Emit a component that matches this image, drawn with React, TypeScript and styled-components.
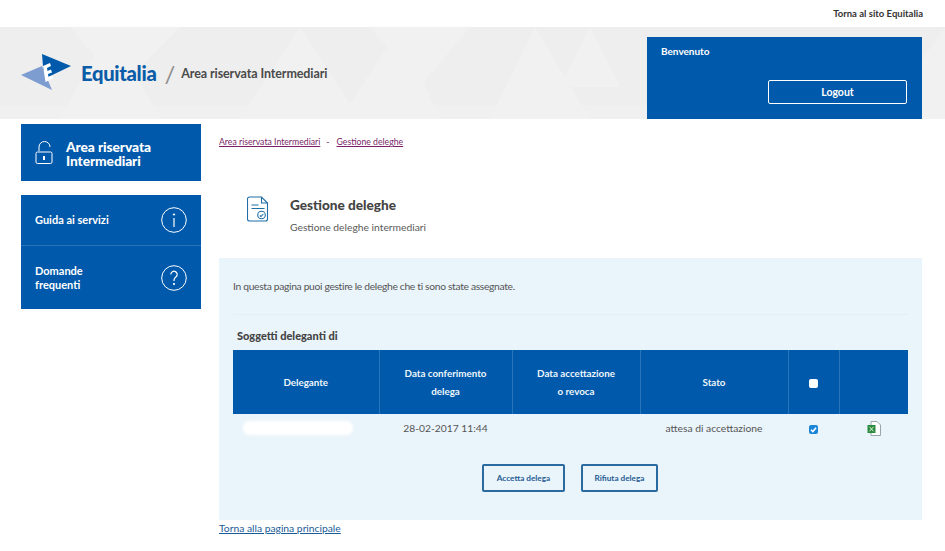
import React from "react";
import styled, { createGlobalStyle } from "styled-components";

const Global = createGlobalStyle`
  html, body { margin: 0; padding: 0; background: #fff; }
  body { font-family: "Lato", "Open Sans", sans-serif; color: #4a4a4a; width: 945px; height: 551px; overflow: hidden; }
  * { box-sizing: border-box; }
`;

const TopBar = styled.div`
  height: 27px; display: flex; align-items: center; justify-content: flex-end;
  padding-right: 22px;
  font-size: 9.5px; font-weight: 700; color: #333;
`;
const Header = styled.header`
  position: relative; height: 92px; background: #eeeeee; display: flex;
  justify-content: space-between; padding-left: 21px; padding-right: 23px; overflow: hidden;
`;
const HeaderArt = styled.svg`
  position: absolute; inset: 0; width: 100%; height: 100%;
`;
const Brand = styled.div`
  position: relative; display: flex; align-items: center; height: 92px;
`;
const LogoBox = styled.svg`
  flex: none; margin-bottom: 2px;
`;
const BrandName = styled.span`
  font-size: 20.2px; font-weight: 900; color: #0b5ca8; margin-left: 10px; letter-spacing: -0.3px;
`;
const Slash = styled.span`
  font-size: 24px; color: #8f8f8f; margin-left: 8px; margin-right: 6px; font-weight: 400;
`;
const AreaName = styled.span`
  font-size: 12.5px; font-weight: 700; color: #4a4a4a; letter-spacing: -0.1px;
`;
const UserPanel = styled.div`
  position: relative; width: 275px; height: 82px; margin-top: 10px; background: #0059aa;
  padding: 7px 15px 15px 14px; display: flex; flex-direction: column; justify-content: space-between;
`;
const Welcome = styled.div`
  color: #fff; font-size: 10px; font-weight: 700; line-height: 14px;
`;
const Logout = styled.button`
  align-self: flex-end; width: 139px; height: 24px; background: transparent; border: 1px solid #fff;
  border-radius: 2px; color: #fff; font: 700 10.5px "Lato", sans-serif;
`;
const Body = styled.div`
  display: flex; padding-left: 21px; padding-right: 23px; gap: 18px; align-items: flex-start;
`;
const Side = styled.aside`
  width: 180px; padding-top: 5px; flex: none; display: flex; flex-direction: column; gap: 14px;
`;
const AreaCard = styled.div`
  height: 57px; background: #0059aa; display: flex; align-items: center; padding-left: 14px; gap: 13px;
  color: #fff; font-size: 13.8px; font-weight: 900; line-height: 14px; letter-spacing: -0.1px;
`;
const AreaCardText = styled.div`
  padding-top: 2px;
`;
const Menu = styled.nav`
  background: #0059aa; display: flex; flex-direction: column;
`;
const MenuItem = styled.div<{ $h: number }>`
  height: ${(p) => p.$h}px; display: flex; align-items: center; justify-content: space-between;
  padding: 0 14px; color: #fff; font-size: 11px; font-weight: 700; line-height: 14px;
  & + & { border-top: 1px solid #2a75ba; }
`;
const Main = styled.main`
  flex: 1; min-width: 0;
`;
const Crumbs = styled.div`
  height: 47px; padding-top: 17px; font-size: 8.7px; line-height: 12px; color: #7a1f66;
  a { color: #7a1f66; text-decoration: underline; }
  span { margin: 0 7px 0 6px; }
`;
const TitleBlock = styled.div`
  height: 92px; padding-left: 28px; padding-top: 30px; display: flex; align-items: flex-start; gap: 21px;
`;
const PageTitle = styled.h1`
  margin: 0; font-size: 13.6px; font-weight: 900; line-height: 18px; color: #444;
`;
const PageSub = styled.p`
  margin: 6px 0 0; font-size: 10.3px; line-height: 14px; color: #5a5a5a;
`;
const Panel = styled.section`
  background: #eaf4fb; height: 262px; padding: 20px 14px 0;
`;
const Intro = styled.p`
  margin: 0; font-size: 10.3px; letter-spacing: -0.33px; line-height: 16px; height: 37px; color: #555; border-bottom: 1px solid #e3eef6;
`;
const SectionLabel = styled.div`
  margin-top: 14px; padding-left: 4px; font-size: 11px; font-weight: 900; line-height: 14px; color: #444; height: 21px;
`;
const Table = styled.table`
  border-collapse: collapse; table-layout: fixed; width: 675px;
`;
const Th = styled.th<{ $w: number }>`
  width: ${(p) => p.$w}px; height: 64px; background: #0059aa; color: #eef6fc; font-size: 9.8px; font-weight: 700;
  line-height: 18px; text-align: center; padding: 0 8px; border-left: 1px solid #2a75ba;
  &:first-child { border-left: 0; }
`;
const Td = styled.td`
  height: 28px; padding: 0; text-align: center; font-size: 10.3px; color: #555; vertical-align: middle;
`;
const Redact = styled.div`
  width: 110px; height: 14px; background: #fff; border-radius: 6px; margin: 0 0 0 10px; filter: blur(1.5px);
`;
const Box = styled.span<{ $on?: boolean }>`
  display: inline-flex; align-items: center; justify-content: center; width: 9px; height: 9px; border-radius: 2px;
  background: ${(p) => (p.$on ? "#1c86d6" : "#fff")}; vertical-align: middle;
`;
const Actions = styled.div`
  display: flex; justify-content: center; gap: 16px; margin-top: 22px; padding-right: 1px;
`;
const ActionBtn = styled.button<{ $w: number }>`
  width: ${(p) => p.$w}px; height: 28px; background: transparent; border: 2px solid #2a6a9f; border-radius: 2px;
  color: #1f5b92; font: 700 8.2px "Lato", sans-serif; padding: 0;
`;
const Back = styled.a`
  display: block; margin-top: 1px; font-size: 10.3px; line-height: 14px; color: #1b5c97; text-decoration: underline;
`;

const Logo = () => (
  <LogoBox width="50" height="38" viewBox="0 0 50 38">
    <polygon points="21,1 50,13 23,26" fill="#0059aa" />
    <polygon points="0,22 21,13 31,37" fill="#7d9ccf" />
    <polygon points="22,13 29,10 30,13 26,15 26.5,18 30,16.5 31,19.5 27,21 27.5,24 31.5,22.5 32,25.5 24.5,29" fill="#fff" />
  </LogoBox>
);
const Lock = () => (
  <svg width="18" height="25" viewBox="0 0 18 25" fill="none" stroke="#fff" strokeWidth="1">
    <path d="M4 11V7a5.5 5.5 0 0 1 11 0" />
    <rect x="1" y="12" width="16" height="11.5" rx="1.5" />
    <rect x="8" y="16" width="2" height="4" fill="#fff" stroke="none" />
  </svg>
);
const Circle = ({ g }: { g: string }) => (
  <svg width="26" height="26" viewBox="0 0 26 26" fill="none" stroke="#fff">
    <circle cx="13" cy="13" r="12.3" />
    {g === "i" ? (
      <>
        <path d="M13 11v9" strokeWidth="1.2" />
        <circle cx="13" cy="7.5" r="0.7" fill="#fff" />
      </>
    ) : (
      <>
        <path d="M9.8 9.5a3.2 3.2 0 1 1 5 2.6c-1.2.9-1.8 1.500-1.800 3v1" strokeWidth="1.2" />
        <circle cx="13" cy="19" r="0.7" fill="#fff" />
      </>
    )}
  </svg>
);
const DocIcon = () => (
  <svg width="22" height="26" viewBox="0 0 22 26" fill="none" stroke="#1f6ea8" strokeWidth="1.1" style={{ flex: "none" }}>
    <path d="M2.5 1h12l6 6v16a2 2 0 0 1-2 2H2.500a2 2 0 0 1-2-2V3a2 2 0 0 1 2-2z" />
    <path d="M14.500 1v6h6M4.500 9h7M4.500 12.500h13" />
    <circle cx="14.500" cy="19" r="3.800" />
    <path d="M12.800 19.500l1.200 1 2.300-2.500" />
  </svg>
);
const Tick = () => (
  <svg width="9" height="9" viewBox="0 0 8 8" fill="none" stroke="#fff" strokeWidth="1.400">
    <path d="M1.800 4.200l1.600 1.600 2.900-3.400" />
  </svg>
);
const Excel = () => (
  <svg width="14" height="15" viewBox="0 0 14 15" style={{ verticalAlign: "middle" }}>
    <path d="M4 .5h6l3.500 3.500v10.500H4z" fill="#fff" stroke="#9aa4a8" />
    <rect x="0.500" y="4" width="8" height="8" fill="#2a8a3c" />
    <path d="M2.500 5.800l4 4.500M6.500 5.800l-4 4.500" stroke="#dff3e2" strokeWidth="1" />
  </svg>
);

export default function App() {
  return (
    <>
      <Global />
      <TopBar>Torna al sito Equitalia</TopBar>
      <Header>
        <HeaderArt viewBox="0 0 945 92" preserveAspectRatio="none">
          <g fill="#f1f1f1">
            <polygon points="60,92 110,0 160,92" />
            <polygon points="240,92 300,0 360,92" />
            <polygon points="340,92 400,0 440,92" />
            <polygon points="490,92 535,0 590,92" />
            <polygon points="70,0 120,60 180,0" />
            <polygon points="370,0 420,60 470,0" />
            <polygon points="560,60 620,60 590,0" />
            <polygon points="880,92 945,0 945,92" />
          </g>
          <rect y="78" width="945" height="14" fill="#f1f1f1" opacity="0.6" />
        </HeaderArt>
        <Brand>
          <Logo />
          <BrandName>Equitalia</BrandName>
          <Slash>/</Slash>
          <AreaName>Area riservata Intermediari</AreaName>
        </Brand>
        <UserPanel>
          <Welcome>Benvenuto</Welcome>
          <Logout>Logout</Logout>
        </UserPanel>
      </Header>
      <Body>
        <Side>
          <AreaCard>
            <Lock />
            <AreaCardText>Area riservata<br />Intermediari</AreaCardText>
          </AreaCard>
          <Menu>
            <MenuItem $h={50}>Guida ai servizi<Circle g="i" /></MenuItem>
            <MenuItem $h={64}><div>Domande<br />frequenti</div><Circle g="?" /></MenuItem>
          </Menu>
        </Side>
        <Main>
          <Crumbs><a>Area riservata Intermediari</a><span>-</span><a>Gestione deleghe</a></Crumbs>
          <TitleBlock>
            <DocIcon />
            <div>
              <PageTitle>Gestione deleghe</PageTitle>
              <PageSub>Gestione deleghe intermediari</PageSub>
            </div>
          </TitleBlock>
          <Panel>
            <Intro>In questa pagina puoi gestire le deleghe che ti sono state assegnate.</Intro>
            <SectionLabel>Soggetti deleganti di</SectionLabel>
            <Table>
              <thead>
                <tr>
                  <Th $w={146}>Delegante</Th>
                  <Th $w={133}>Data conferimento<br />delega</Th>
                  <Th $w={128}>Data accettazione<br />o revoca</Th>
                  <Th $w={148}>Stato</Th>
                  <Th $w={51}><Box /></Th>
                  <Th $w={69}></Th>
                </tr>
              </thead>
              <tbody>
                <tr>
                  <Td><Redact /></Td>
                  <Td>28-02-2017 11:44</Td>
                  <Td></Td>
                  <Td>attesa di accettazione</Td>
                  <Td><Box $on><Tick /></Box></Td>
                  <Td><Excel /></Td>
                </tr>
              </tbody>
            </Table>
            <Actions>
              <ActionBtn $w={83}>Accetta delega</ActionBtn>
              <ActionBtn $w={77}>Rifiuta delega</ActionBtn>
            </Actions>
          </Panel>
          <Back>Torna alla pagina principale</Back>
        </Main>
      </Body>
    </>
  );
}
